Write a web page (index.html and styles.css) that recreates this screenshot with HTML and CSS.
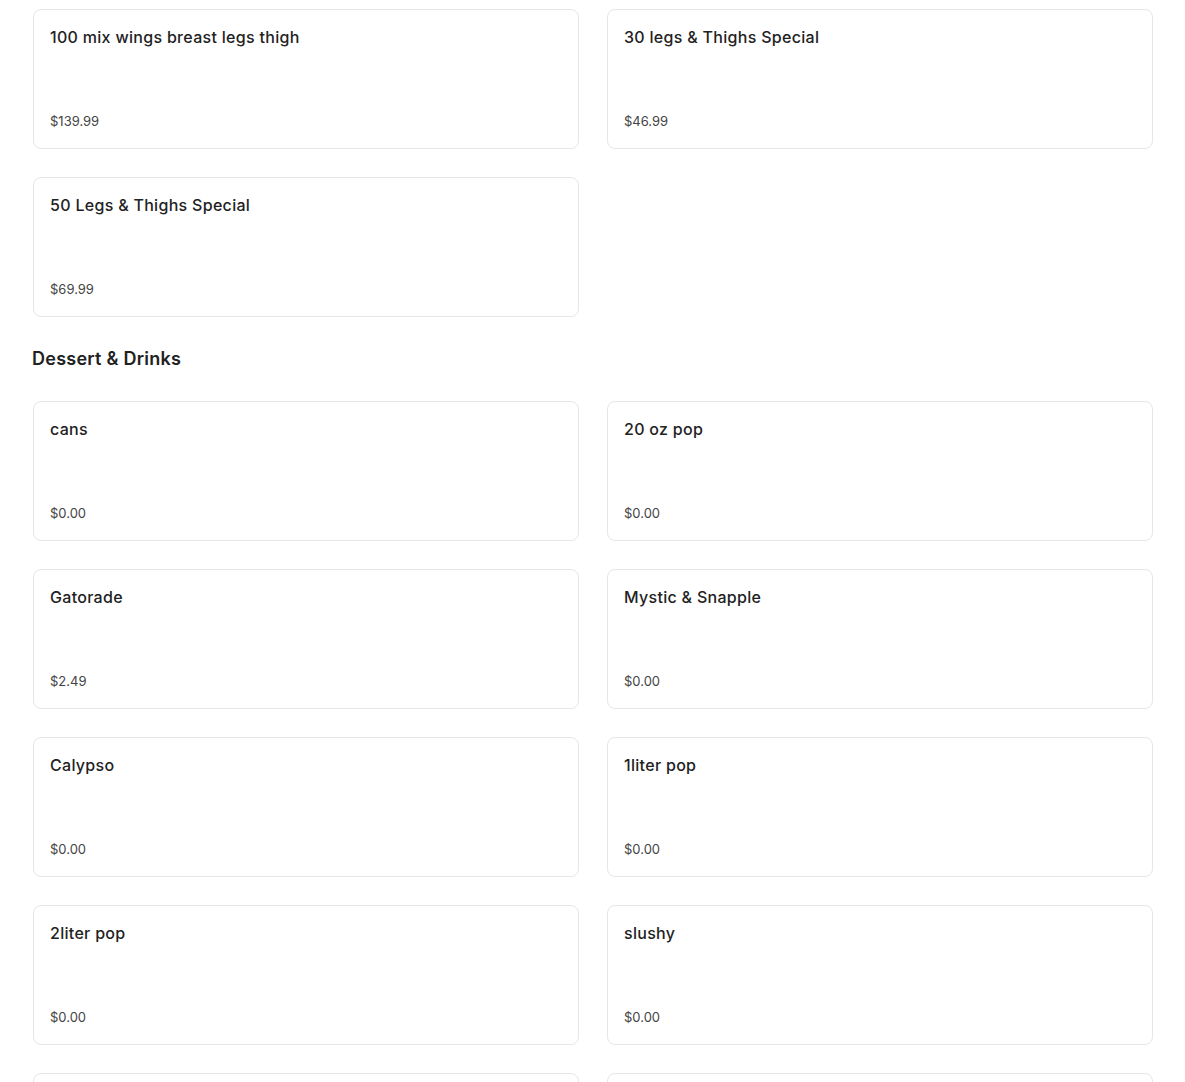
FILE: index.html
```html
<!DOCTYPE html>
<html lang="en">
<head>
<meta charset="utf-8">
<title>Menu</title>
<link rel="stylesheet" href="styles.css">
</head>
<body>
<main class="menu">
  <section class="category">
    <div class="grid">
      <div class="card"><h3 class="name">100 mix wings breast legs thigh</h3><p class="price">$139.99</p></div>
      <div class="card"><h3 class="name">30 legs &amp; Thighs Special</h3><p class="price">$46.99</p></div>
      <div class="card"><h3 class="name">50 Legs &amp; Thighs Special</h3><p class="price">$69.99</p></div>
    </div>
  </section>
  <section class="category">
    <h2 class="cat-title">Dessert &amp; Drinks</h2>
    <div class="grid">
      <div class="card"><h3 class="name">cans</h3><p class="price">$0.00</p></div>
      <div class="card"><h3 class="name">20 oz pop</h3><p class="price">$0.00</p></div>
      <div class="card"><h3 class="name">Gatorade</h3><p class="price">$2.49</p></div>
      <div class="card"><h3 class="name">Mystic &amp; Snapple</h3><p class="price">$0.00</p></div>
      <div class="card"><h3 class="name">Calypso</h3><p class="price">$0.00</p></div>
      <div class="card"><h3 class="name">1liter pop</h3><p class="price">$0.00</p></div>
      <div class="card"><h3 class="name">2liter pop</h3><p class="price">$0.00</p></div>
      <div class="card"><h3 class="name">slushy</h3><p class="price">$0.00</p></div>
      <div class="card"><h3 class="name">&nbsp;</h3><p class="price">&nbsp;</p></div>
      <div class="card"><h3 class="name">&nbsp;</h3><p class="price">&nbsp;</p></div>
    </div>
  </section>
</main>
</body>
</html>
```
FILE: styles.css
```css
* { box-sizing: border-box; }
html, body { margin: 0; padding: 0; background: #fff; }
body {
  font-family: "Inter", "Noto Sans", sans-serif;
  color: #222;
}
.menu {
  width: 1121px;
  margin-left: 32px;
  padding-top: 9px;
}
.grid {
  display: grid;
  grid-template-columns: 546px 546px;
  column-gap: 28px;
  row-gap: 28px;
  padding-left: 1px;
}
.card {
  height: 140px;
  border: 1px solid #e6e6e6;
  border-radius: 8px;
  padding: 15px 15px 17px 16px;
  display: flex;
  flex-direction: column;
  justify-content: space-between;
  background: #fff;
}
.name {
  margin: 0;
  font-size: 16px;
  line-height: 24px;
  font-weight: 500;
  letter-spacing: 0.3px;
  color: #222;
}
.price {
  margin: 0;
  font-size: 13px;
  line-height: 20px;
  font-weight: 400;
  color: #444;
}
.cat-title {
  margin: 28px 0 28px 0;
  font-size: 18px;
  line-height: 28px;
  font-weight: 600;
  letter-spacing: 0.25px;
  color: #222;
}
```
